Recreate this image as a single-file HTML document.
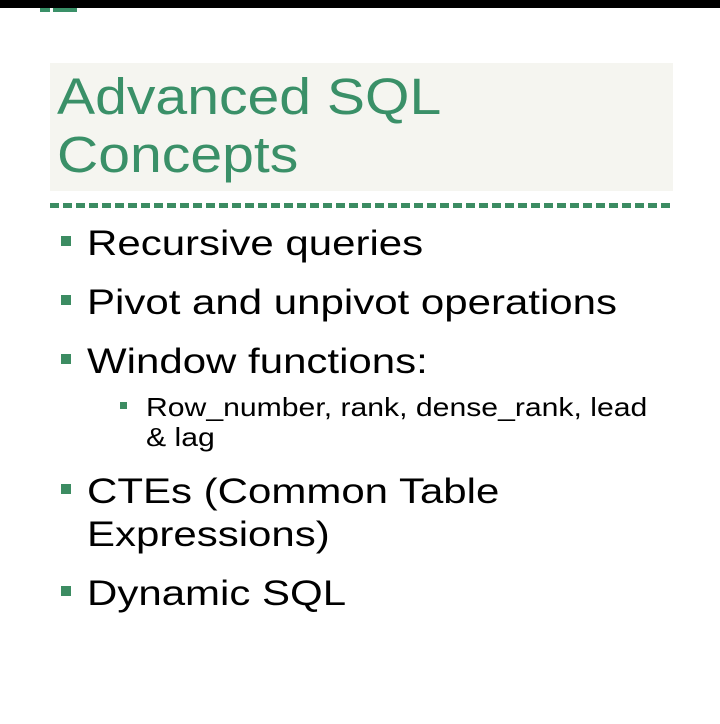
<!DOCTYPE html>
<html><head><style>
body{margin:0;width:720px;height:724px;background:#fff;position:relative;overflow:hidden;font-family:"Liberation Sans",sans-serif}
.t{position:absolute;white-space:nowrap;line-height:1;transform-origin:0 0}
.L{transform:scaleX(1.2)}
.T{transform:scaleX(1.12)}
.S{transform:scaleX(1.16)}
.b{position:absolute;width:10px;height:10px;background:#3c8c62}
.s{position:absolute;width:7px;height:7px;background:#3c8c62}
</style></head><body>
<div style="position:absolute;left:40px;top:8px;width:10px;height:4px;background:#3a9068"></div>
<div style="position:absolute;left:53px;top:8px;width:24px;height:4px;background:#3a9068"></div>
<div style="position:absolute;left:0;top:0;width:720px;height:8px;background:#000"></div>
<div style="position:absolute;left:50px;top:63px;width:623px;height:128px;background:#f5f5f0"></div>
<div class="t T" style="left:57px;top:71px;font-size:51px;color:#3a9068">Advanced SQL</div>
<div class="t T" style="left:57px;top:129px;font-size:51px;color:#3a9068">Concepts</div>
<div style="position:absolute;left:50px;top:203px;width:623px;height:5px;background:repeating-linear-gradient(90deg,#3c8c62 0 9px,transparent 9px 13px)"></div>
<div class="b" style="left:61px;top:236px"></div>
<div class="t L" style="left:87px;top:226px;font-size:35px;color:#000">Recursive queries</div>
<div class="b" style="left:61px;top:295px"></div>
<div class="t L" style="left:87px;top:285px;font-size:35px;color:#000">Pivot and unpivot operations</div>
<div class="b" style="left:61px;top:354px"></div>
<div class="t L" style="left:87px;top:344px;font-size:35px;color:#000">Window functions:</div>
<div class="s" style="left:120px;top:402px"></div>
<div class="t S" style="left:146px;top:394px;font-size:26px;color:#000">Row_number, rank, dense_rank, lead</div>
<div class="t S" style="left:146px;top:424px;font-size:26px;color:#000">&amp; lag</div>
<div class="b" style="left:61px;top:484px"></div>
<div class="t L" style="left:87px;top:474px;font-size:35px;color:#000">CTEs (Common Table</div>
<div class="t L" style="left:87px;top:517px;font-size:35px;color:#000">Expressions)</div>
<div class="b" style="left:61px;top:586px"></div>
<div class="t L" style="left:87px;top:576px;font-size:35px;color:#000">Dynamic SQL</div>
</body></html>
